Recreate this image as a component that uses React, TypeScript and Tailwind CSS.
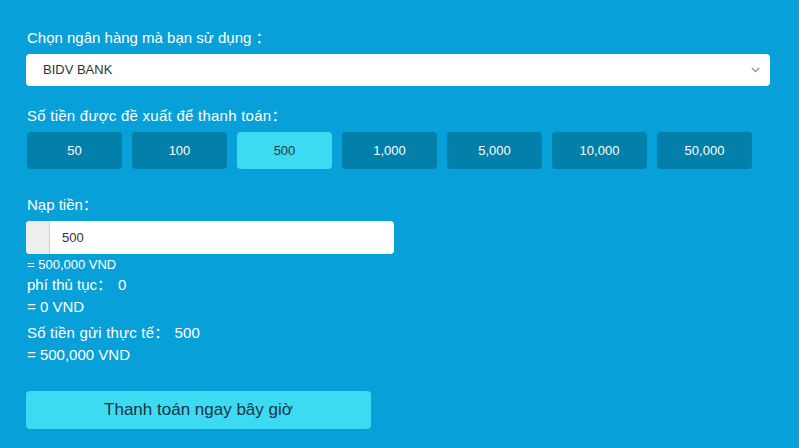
import React from "react";

const amounts = ["50", "100", "500", "1,000", "5,000", "10,000", "50,000"];

export default function App() {
  return (
    <div
      className="w-[799px] h-[448px] bg-[#08a0d9] overflow-hidden text-white"
      style={{ fontFamily: '"Liberation Sans", "Noto Sans CJK SC", Arial, sans-serif' }}
    >
      <div className="pl-[27px] pr-[29px] pt-[29px]">
        <div className="text-[15px] leading-[18px]">Chọn ngân hàng mà bạn sử dụng ：</div>
        <div className="mt-[7px] ml-[-1px] h-[32px] bg-white rounded-[4px] flex items-center justify-between pl-[17px] pr-[10px]">
          <span className="text-[13px] text-[#333]">BIDV BANK</span>
          <svg width="9" height="6" viewBox="0 0 9 6" fill="none">
            <path d="M0.8 1l3.7 3.7L8.2 1" stroke="#888" strokeWidth="1.1" />
          </svg>
        </div>

        <div className="mt-[21px] text-[15px] leading-[18px] tracking-[0.25px]">Số tiền được đề xuất để thanh toán：</div>
        <div className="mt-[7px] flex gap-[10px]">
          {amounts.map((a) => (
            <div
              key={a}
              className={
                a === "500"
                  ? "w-[95px] h-[37px] rounded-[4px] bg-[#3ddbf1] text-[#1d3a4b] text-[13px] flex items-center justify-center"
                  : "w-[95px] h-[37px] rounded-[4px] bg-[#0280aa] text-white text-[13px] flex items-center justify-center"
              }
            >
              {a}
            </div>
          ))}
        </div>

        <div className="mt-[27px] text-[15px] leading-[18px]">Nạp tiền：</div>
        <div className="mt-[7px] ml-[-1px] w-[368px] h-[33px] bg-white rounded-[4px] flex overflow-hidden">
          <div className="w-[24px] h-full bg-[#eeeeee] border-r border-[#cfcfcf]" />
          <div className="flex items-center pl-[12px] text-[13px] text-[#333]">500</div>
        </div>
        <div className="mt-[2px] text-[13px] leading-[18px]">= 500,000 VND</div>
        <div className="text-[15px] leading-[22px]">
          phí thủ tục：<span className="ml-[6px]">0</span>
        </div>
        <div className="text-[15px] leading-[22px]">= 0 VND</div>
        <div className="mt-[4px] text-[15px] leading-[22px] tracking-[0.2px]">
          Số tiền gửi thực tế：<span className="ml-[5px]">500</span>
        </div>
        <div className="text-[15px] leading-[22px]">= 500,000 VND</div>

        <div className="mt-[25px] ml-[-1px] w-[345px] h-[38px] rounded-[4px] bg-[#3ddbf1] text-[#163447] text-[17px] flex items-center justify-center">
          Thanh toán ngay bây giờ
        </div>
      </div>
    </div>
  );
}
